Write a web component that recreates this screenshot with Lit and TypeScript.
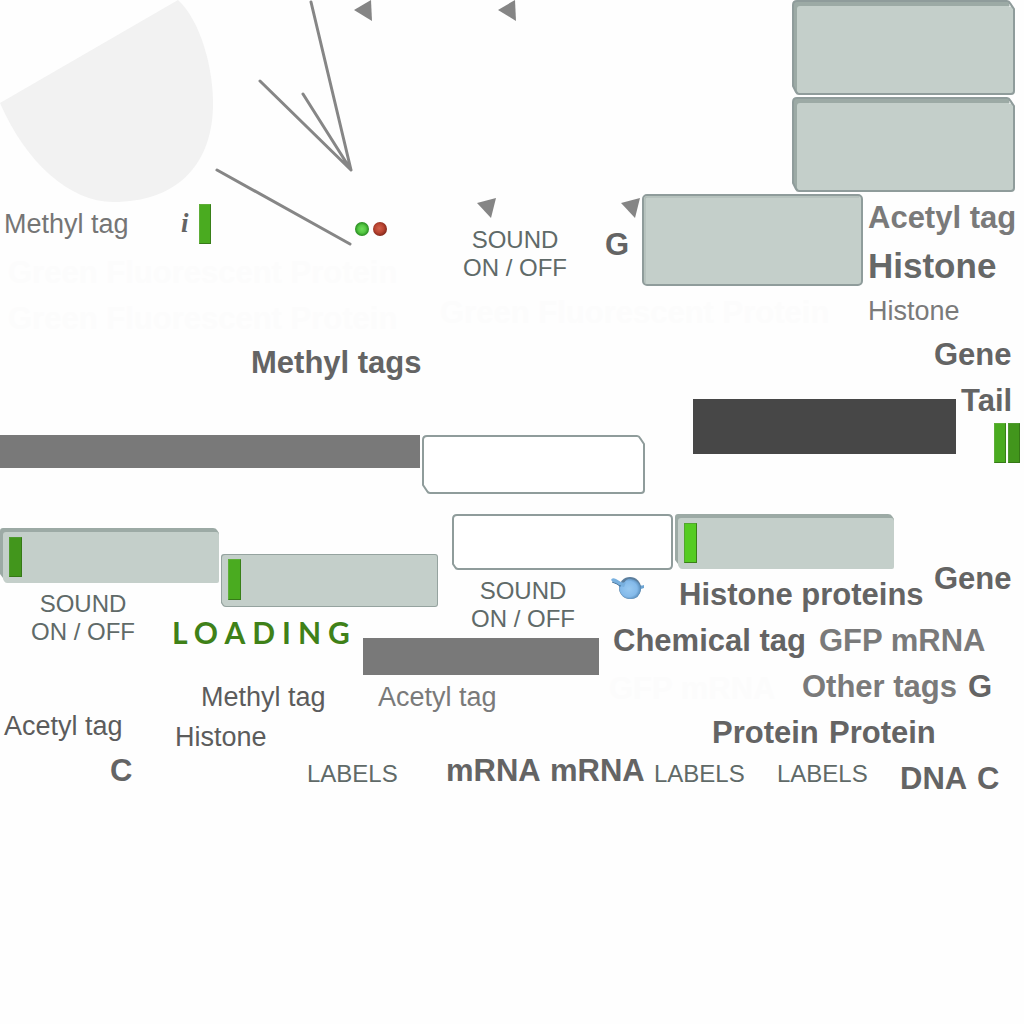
import { LitElement, html, svg, css, type SVGTemplateResult } from "lit";
import { customElement, property } from "lit/decorators.js";
import { classMap } from "lit/directives/class-map.js";

interface Label {
  x: number;
  y: number;
  text: string;
  kind: string;
}

interface Art {
  x: number;
  y: number;
  w: number;
  h: number;
  art: SVGTemplateResult;
}

interface Block {
  x: number;
  y: number;
  w: number;
  h: number;
  kind: string;
}

const LABELS: Label[] = [
  { x: 4, y: 208, text: "Methyl tag", kind: "regular mid" },
  { x: 181, y: 207, text: "i", kind: "info" },
  { x: 605, y: 227, text: "G", kind: "bold" },
  { x: 868, y: 200, text: "Acetyl tag", kind: "bold soft" },
  { x: 868, y: 246, text: "Histone", kind: "large" },
  { x: 868, y: 295, text: "Histone", kind: "regular soft" },
  { x: 251, y: 345, text: "Methyl tags", kind: "bold" },
  { x: 934, y: 337, text: "Gene", kind: "bold" },
  { x: 961, y: 383, text: "Tail", kind: "bold" },
  { x: 934, y: 561, text: "Gene", kind: "bold" },
  { x: 679, y: 577, text: "Histone proteins", kind: "bold" },
  { x: 613, y: 623, text: "Chemical tag", kind: "bold" },
  { x: 819, y: 623, text: "GFP mRNA", kind: "bold soft" },
  { x: 802, y: 669, text: "Other tags", kind: "bold soft" },
  { x: 968, y: 669, text: "G", kind: "bold" },
  { x: 712, y: 715, text: "Protein", kind: "bold" },
  { x: 829, y: 715, text: "Protein", kind: "bold" },
  { x: 446, y: 753, text: "mRNA", kind: "bold" },
  { x: 550, y: 753, text: "mRNA", kind: "bold" },
  { x: 900, y: 761, text: "DNA", kind: "bold" },
  { x: 977, y: 761, text: "C", kind: "bold" },
  { x: 110, y: 753, text: "C", kind: "bold" },
  { x: 201, y: 681, text: "Methyl tag", kind: "regular dark" },
  { x: 378, y: 681, text: "Acetyl tag", kind: "regular soft" },
  { x: 4, y: 710, text: "Acetyl tag", kind: "regular dark" },
  { x: 175, y: 721, text: "Histone", kind: "regular dark" },
  { x: 172, y: 614, text: "LOADING", kind: "loading" },
  { x: 8, y: 255, text: "Green Fluorescent Protein", kind: "bold ghost" },
  { x: 8, y: 301, text: "Green Fluorescent Protein", kind: "bold ghost" },
  { x: 440, y: 295, text: "Green Fluorescent Protein", kind: "bold ghost" },
  { x: 609, y: 671, text: "GFP mRNA", kind: "bold ghost" },
];

const BUTTONS: Label[] = [
  { x: 455, y: 226, text: "SOUND\nON / OFF", kind: "sound" },
  { x: 23, y: 590, text: "SOUND\nON / OFF", kind: "sound" },
  { x: 463, y: 577, text: "SOUND\nON / OFF", kind: "sound" },
  { x: 307, y: 760, text: "LABELS", kind: "" },
  { x: 654, y: 760, text: "LABELS", kind: "" },
  { x: 777, y: 760, text: "LABELS", kind: "" },
];

const BLOCKS: Block[] = [
  { x: 0, y: 435, w: 420, h: 33, kind: "bar" },
  { x: 363, y: 638, w: 236, h: 37, kind: "bar" },
  { x: 693, y: 399, w: 263, h: 55, kind: "bar deep" },
];

const CHIPS: Block[] = [
  { x: 199, y: 204, w: 12, h: 40, kind: "chip" },
  { x: 994, y: 423, w: 12, h: 40, kind: "chip" },
  { x: 1008, y: 423, w: 12, h: 40, kind: "chip shade" },
  { x: 9, y: 537, w: 13, h: 40, kind: "chip shade" },
  { x: 228, y: 559, w: 13, h: 41, kind: "chip" },
  { x: 684, y: 523, w: 13, h: 40, kind: "chip bright" },
];

const raised = svg`
  <path d="M5 1H215Q217 1 218 3L222 9V91Q222 94 219 94H7Q5 94 4 92L1 86V5Q1 1 5 1Z" fill="#9caaa5"/>
  <path d="M8 6H218L222 9V91Q222 94 219 94H7L5 91V9Q5 6 8 6Z" fill="#c4cfca"/>
  <path d="M218 4V7" stroke="#fff" stroke-width="1"/>
  <path d="M5 1H215Q217 1 218 3L222 9V91Q222 94 219 94H7Q5 94 4 92L1 86V5Q1 1 5 1Z" fill="none" stroke="#8f9c9b" stroke-width="2"/>`;

const slab = svg`
  <path d="M3 0H213Q216 0 217 2L219 5V52H6Q4 52 3 50L0 46V3Q0 0 3 0Z" fill="#9caaa5"/>
  <path d="M6 4H216Q219 4 219 7V53Q219 55 217 55H7Q5 55 4 53L3 51V7Q3 4 6 4Z" fill="#c4cfca"/>`;

const pointerLeft = svg`<path d="M0 10L17 0L18 21Z" fill="#858585"/>`;
const pointerDown = svg`<path d="M0 5L19 0L14 20Z" fill="#858585"/>`;

const ARTS: Art[] = [
  {
    x: 0, y: 0, w: 214, h: 203,
    art: svg`<path d="M178 0C200 20 214 68 213 108C211 166 176 202 113 202C70 202 26 163 0 103Z" fill="#f2f2f2"/>`,
  },
  {
    x: 215, y: 0, w: 138, h: 246,
    art: svg`<path d="M96 2L136 170M45 81L136 170M88 94L136 170M2 170L135 244" fill="none" stroke="#868686" stroke-width="3" stroke-linecap="round"/>`,
  },
  { x: 354, y: 0, w: 18, h: 21, art: pointerLeft },
  { x: 498, y: 0, w: 18, h: 21, art: pointerLeft },
  { x: 477, y: 198, w: 19, h: 20, art: pointerDown },
  { x: 621, y: 198, w: 19, h: 20, art: pointerDown },
  {
    x: 355, y: 222, w: 32, h: 14,
    art: svg`
      <defs>
        <radialGradient id="green" cx="50%" cy="50%" r="50%">
          <stop offset="0" stop-color="#6fdc5c"/><stop offset=".55" stop-color="#55c843"/><stop offset="1" stop-color="#278a20"/>
        </radialGradient>
        <radialGradient id="red" cx="45%" cy="45%" r="55%">
          <stop offset="0" stop-color="#d0614b"/><stop offset=".55" stop-color="#bb4532"/><stop offset="1" stop-color="#84281b"/>
        </radialGradient>
      </defs>
      <circle cx="7" cy="7" r="7" fill="url(#green)"/>
      <circle cx="25" cy="7" r="7" fill="url(#red)"/>`,
  },
  {
    x: 611, y: 576, w: 34, h: 24,
    art: svg`
      <defs>
        <radialGradient id="blue" cx="45%" cy="50%" r="58%">
          <stop offset="0" stop-color="#98c9f1"/><stop offset=".65" stop-color="#84baea"/><stop offset="1" stop-color="#4f83b0"/>
        </radialGradient>
      </defs>
      <path d="M27 9Q30 10 33 9V12Q30 13 27 14Z" fill="#6ba3d2"/>
      <circle cx="19" cy="12" r="11" fill="#5b7d9c"/>
      <path d="M8 12Q9 8 13 7Q16 2 20 3Q26 4 29 9Q30 11 30 13Q29 23 19 23Q9 22 8 12Z" fill="url(#blue)"/>
      <path d="M0 4Q1 1 5 3L10 6Q13 7 15 6L13 11Q9 11 6 8L2 6Z" fill="#78b0df"/>
      <path d="M1 6L6 8Q8 10 10 10" fill="none" stroke="#47769f" stroke-width="1"/>`,
  },
  { x: 792, y: 0, w: 223, h: 95, art: raised },
  { x: 792, y: 97, w: 223, h: 95, art: raised },
  {
    x: 642, y: 194, w: 221, h: 92,
    art: svg`
      <rect x="1" y="1" width="219" height="90" rx="4" fill="#c4cfca"/>
      <path d="M3 89V5Q3 3 5 3H217" fill="none" stroke="#a9b6b1" stroke-width="1"/>
      <rect x="1" y="1" width="219" height="90" rx="4" fill="none" stroke="#8f9c9b" stroke-width="2"/>`,
  },
  {
    x: 422, y: 435, w: 223, h: 59,
    art: svg`<path d="M5 1H215Q217 1 218 3L222 9V55Q222 58 219 58H8Q6 58 5 56L1 50V5Q1 1 5 1Z" fill="#fff" stroke="#8f9c9b" stroke-width="2"/>`,
  },
  {
    x: 452, y: 514, w: 221, h: 56,
    art: svg`<path d="M5 1H216Q220 1 220 5V51Q220 55 216 55H6Q4 55 3 53L1 50V5Q1 1 5 1Z" fill="#fff" stroke="#8f9c9b" stroke-width="2"/>`,
  },
  { x: 0, y: 528, w: 219, h: 55, art: slab },
  { x: 675, y: 514, w: 219, h: 55, art: slab },
  {
    x: 221, y: 554, w: 217, h: 53,
    art: svg`
      <path d="M3 0H214Q217 0 217 3V50Q217 53 214 53H5Q3 53 2 52L0 49V3Q0 0 3 0Z" fill="#95a39f"/>
      <path d="M4 1H214Q216 1 216 3V50Q216 52 214 52H5Q3 52 2 50L1 48V4Q1 1 4 1Z" fill="#c4cfca"/>`,
  },
];

@customElement("sprite-block")
export class SpriteBlock extends LitElement {
  @property() kind = "";

  static styles = css`
    :host {
      display: block;
    }
    .block {
      box-sizing: border-box;
      width: 100%;
      height: 100%;
    }
    .bar {
      background: #797979;
    }
    .deep {
      background: #474747;
    }
    .chip {
      background: #4aab20;
      border: 1px solid #5fae38;
      border-right-color: #387f18;
      border-bottom-color: #367a18;
    }
    .shade {
      background: #42961c;
      border-color: #4f9a2f #357816 #357816 #4f9a2f;
    }
    .bright {
      background: #55cc22;
      border-color: #52a62e #3a7f18 #3a7f18 #52a62e;
    }
  `;

  render() {
    const names = Object.fromEntries(this.kind.split(" ").map((k) => [k, true]));
    return html`<div class=${classMap({ block: true, ...names })}></div>`;
  }
}

@customElement("app-root")
export class AppRoot extends LitElement {
  static styles = css`
    :host {
      display: block;
      font-family: "Liberation Sans", Arial, Helvetica, sans-serif;
      color: #646464;
      background: #fefefe;
    }
    .canvas {
      position: relative;
      width: 100%;
      min-height: 100vh;
      overflow: hidden;
    }
    .item {
      position: absolute;
      display: block;
      white-space: pre;
    }
    .regular {
      font-size: 27px;
      line-height: 32px;
    }
    .bold {
      font-size: 31px;
      line-height: 36px;
      font-weight: 700;
    }
    .large {
      font-size: 35px;
      line-height: 40px;
      font-weight: 700;
      color: #666867;
    }
    .mid {
      color: #757575;
    }
    .soft {
      color: #7a7a7a;
    }
    .dark {
      color: #5c5c5c;
    }
    .ghost {
      color: #fcfcfc;
    }
    .info {
      font: italic 700 27px/32px "Liberation Serif", "Times New Roman", serif;
    }
    .loading {
      font: 700 30px/36px Lato, sans-serif;
      letter-spacing: 7px;
      color: #3f8118;
    }
    .toggle {
      margin: 0;
      padding: 0;
      border: 0;
      background: none;
      font: inherit;
      font-size: 24px;
      line-height: 28px;
      color: #606a68;
      text-align: center;
      cursor: pointer;
    }
    .sound {
      width: 120px;
    }
  `;

  private names(kind: string) {
    return Object.fromEntries(kind.split(" ").filter(Boolean).map((k) => [k, true]));
  }

  private block(b: Block) {
    return html`<sprite-block
      class="item"
      .kind=${b.kind}
      style="left:${b.x}px;top:${b.y}px;width:${b.w}px;height:${b.h}px"
    ></sprite-block>`;
  }

  render() {
    return html`
      <main class="canvas">
        ${ARTS.map(
          (a) => html`<svg
            class="item"
            aria-hidden="true"
            width=${a.w}
            height=${a.h}
            viewBox="0 0 ${a.w} ${a.h}"
            style="left:${a.x}px;top:${a.y}px"
          >${a.art}</svg>`,
        )}
        ${BLOCKS.map((b) => this.block(b))} ${CHIPS.map((b) => this.block(b))}
        ${LABELS.map(
          (l) => html`<span
            class=${classMap({ item: true, ...this.names(l.kind) })}
            style="left:${l.x}px;top:${l.y}px"
          >${l.text}</span>`,
        )}
        ${BUTTONS.map(
          (l) => html`<button
            type="button"
            class=${classMap({ item: true, toggle: true, ...this.names(l.kind) })}
            style="left:${l.x}px;top:${l.y}px"
          >${l.text}</button>`,
        )}
      </main>
    `;
  }
}
